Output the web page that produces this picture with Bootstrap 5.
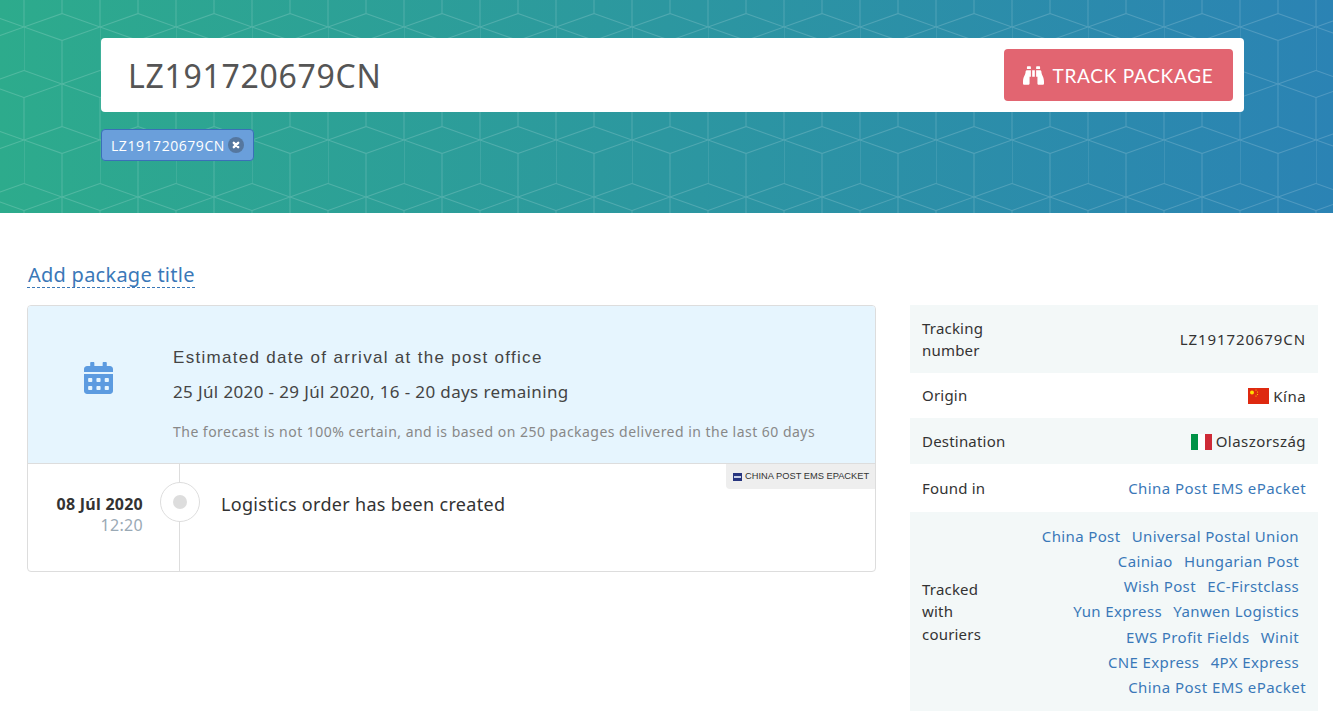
<!DOCTYPE html>
<html lang="en"><head><meta charset="utf-8"><title>Track package</title>
<link href="https://cdn.jsdelivr.net/npm/bootstrap@5.3.0/dist/css/bootstrap.min.css" rel="stylesheet">
<style>
html,body{height:721px;overflow:hidden}
body{font-family:"Noto Sans",sans-serif;color:#333;background:#fff}
a{text-decoration:none;color:#3a78b8}
.hero{height:213px;padding:38px 89px 0 101px;
background-image:url("data:image/svg+xml,%3Csvg xmlns='http://www.w3.org/2000/svg' width='76' height='113.33' viewBox='0 0 76 113.33'%3E%3Cpath fill='none' stroke='%23fff' stroke-opacity='.17' d='M0 0L38 13.33V56.67L0 70V113.33L38 100V56.67L0 43.33V0M76 0L38 13.33M76 43.33L38 56.67L76 70V113.33L38 100M0 0L38 -13.33L76 0M0 113.33L38 126.67L76 113.33'/%3E%3C/svg%3E"),linear-gradient(90deg,#2dab8c,#2b83b4);
background-position:24px 27px,0 0;background-size:76px 113.33px,100% 100%}
.searchbox{height:74px;padding:0 11px 0 27px;border-radius:4px}
.track-num{font-size:32px;color:#555;letter-spacing:.7px;padding-top:2px}
.track-btn{width:229px;height:52px;background:#e26571;color:#fff;font-family:Lato,sans-serif;font-size:19px;letter-spacing:.75px;border:0;border-radius:4px;padding:2px 0 0}
.track-btn:hover{background:#e26571;color:#fff}
.track-btn svg{margin-top:-2px}
.chipx{margin-top:17px;height:32px;width:153px;padding:0 0 0 9px;background:#6a9fdb;border:1px solid #3a6fb8;border-radius:4px;color:#fff;font-size:14px;letter-spacing:.55px;font-family:"Open Sans",sans-serif}
.chipclose{width:16px;height:16px;margin-left:3px;flex:none}
.page-body{padding:49px 15px 0 27px}
.pkg-title{display:inline-block;font-size:20px;line-height:25px;letter-spacing:.25px;border-bottom:1px dashed #3a78b8;margin:0 0 17px 0;padding-left:1px;color:#3a78b8}
.main-split{gap:34px}
.left-col{width:849px;flex:none}
.right-col{width:408px;flex:none}
.track-card{height:267px;border:1px solid #ddd;border-radius:4px;overflow:hidden}
.est{height:158px;background:#e6f5fe;border-bottom:1px solid #ddd}
.est-icon{width:145px;flex:none;padding:0 4px 14px 0}
.est-a{font-family:"Liberation Sans",sans-serif;font-size:17px;letter-spacing:1.3px;color:#444;line-height:20px;margin-top:42px}
.est-b{font-size:17px;letter-spacing:.37px;color:#444;line-height:24px;margin-top:12px}
.est-c{font-size:14px;letter-spacing:.47px;color:#888;line-height:20px;margin-top:18px}
.tl-row{position:relative;height:108px}
.tl-date{width:152px;flex:none;border-right:1px solid #ddd;text-align:right;padding:30px 36px 0 0}
.tl-d1{font-size:16px;font-weight:700;letter-spacing:.25px;line-height:20px;color:#333}
.tl-d2{font-size:16px;letter-spacing:.3px;line-height:23px;color:#9aa9b5}
.tl-dot{position:absolute;left:132px;top:18px;width:40px;height:40px;border-radius:50%;background:#fff;border:1px solid #ddd;display:flex;align-items:center;justify-content:center}
.tl-dot span{width:14px;height:14px;border-radius:50%;background:#ddd}
.tl-text{font-size:18px;letter-spacing:.31px;padding:27px 0 0 41px;line-height:26px;color:#333}
.tl-src{position:absolute;right:0;top:0;width:149px;height:25px;background:#eee;border-bottom-left-radius:4px;font-size:9.3px;font-family:"Liberation Sans",sans-serif;color:#333;padding:1px 0 0 7px;gap:3px}
.tl-src svg{margin-top:-1px}
.info-row{padding:0 12px;font-size:15px;color:#333}
.info-row.alt{background:#f3f8f8}
.info-row>span:first-child{letter-spacing:.2px}
.val{letter-spacing:.45px;padding-top:1px}
.r1{height:68px;line-height:22px}.r2{height:45px}.r3{height:46px}.r4{height:48px}.r5{height:199px}
.lbl{width:80px;flex:none}
.couriers{text-align:right;line-height:25.2px;font-size:15px;letter-spacing:.37px;padding-top:1px}
.couriers a{margin-left:7px}
.couriers .pad{padding-right:7px}
.info-row>a,.couriers .last{letter-spacing:.45px}
.tnum{letter-spacing:.9px}
</style></head><body>
<header class="hero">
 <div class="searchbox bg-white d-flex align-items-center justify-content-between">
  <span class="track-num">LZ191720679CN</span>
  <button class="btn track-btn d-flex align-items-center justify-content-center gap-2" type="button">
   <svg width="21" height="21" viewBox="0 0 512 512" fill="#fff"><path d="M416 48c0-8.84-7.16-16-16-16h-64c-8.84 0-16 7.16-16 16v48h96V48zM63.91 159.99C61.4 253.84 3.46 274.22 0 404v44c0 17.67 14.33 32 32 32h96c17.67 0 32-14.33 32-32V288h32V128H95.84c-17.63 0-31.45 14.37-31.93 31.99zm384.18 0c-.48-17.62-14.3-31.99-31.93-31.99H320v160h32v160c0 17.67 14.33 32 32 32h96c17.67 0 32-14.33 32-32v-44c-3.46-129.78-61.4-150.16-63.91-244.01zM176 32h-64c-8.84 0-16 7.16-16 16v48h96V48c0-8.84-7.16-16-16-16zm48 256h64V128h-64v160z"/></svg>
   TRACK PACKAGE</button>
 </div>
 <div class="chipx d-flex align-items-center">LZ191720679CN
  <svg class="chipclose" viewBox="0 0 16 16"><circle cx="8" cy="8" r="8" fill="#55779f"/><path d="M5.8 5.8l4.4 4.4M10.2 5.8l-4.4 4.4" stroke="#fff" stroke-width="2.4" stroke-linecap="round"/></svg>
 </div>
</header>
<main class="page-body">
 <a class="pkg-title" href="#">Add package title</a>
 <div class="d-flex main-split">
  <div class="left-col">
   <div class="track-card bg-white">
    <div class="est d-flex">
     <div class="est-icon d-flex align-items-center justify-content-center">
      <svg width="29" height="32" viewBox="0 0 448 512" preserveAspectRatio="none" fill="#5c9be0"><path d="M0 464c0 26.5 21.5 48 48 48h352c26.5 0 48-21.5 48-48V192H0v272zm320-196c0-6.6 5.4-12 12-12h40c6.6 0 12 5.4 12 12v40c0 6.6-5.4 12-12 12h-40c-6.6 0-12-5.4-12-12v-40zm0 128c0-6.6 5.4-12 12-12h40c6.6 0 12 5.4 12 12v40c0 6.6-5.4 12-12 12h-40c-6.6 0-12-5.4-12-12v-40zM192 268c0-6.6 5.4-12 12-12h40c6.6 0 12 5.4 12 12v40c0 6.6-5.4 12-12 12h-40c-6.6 0-12-5.4-12-12v-40zm0 128c0-6.6 5.4-12 12-12h40c6.6 0 12 5.4 12 12v40c0 6.6-5.4 12-12 12h-40c-6.6 0-12-5.4-12-12v-40zM64 268c0-6.6 5.4-12 12-12h40c6.6 0 12 5.4 12 12v40c0 6.6-5.4 12-12 12H76c-6.6 0-12-5.4-12-12v-40zm0 128c0-6.6 5.4-12 12-12h40c6.6 0 12 5.4 12 12v40c0 6.6-5.4 12-12 12H76c-6.6 0-12-5.4-12-12v-40zM400 64h-48V16c0-8.8-7.2-16-16-16h-32c-8.8 0-16 7.2-16 16v48H160V16c0-8.8-7.2-16-16-16h-32c-8.8 0-16 7.2-16 16v48H48C21.5 64 0 85.5 0 112v48h448v-48c0-26.5-21.5-48-48-48z"/></svg>
     </div>
     <div>
      <div class="est-a">Estimated date of arrival at the post office</div>
      <div class="est-b">25 Júl 2020 - 29 Júl 2020, 16 - 20 days remaining</div>
      <div class="est-c">The forecast is not 100% certain, and is based on 250 packages delivered in the last 60 days</div>
     </div>
    </div>
    <div class="tl-row d-flex">
     <div class="tl-date"><div class="tl-d1">08 Júl 2020</div><div class="tl-d2">12:20</div></div>
     <div class="tl-dot"><span></span></div>
     <div class="tl-text">Logistics order has been created</div>
     <div class="tl-src d-flex align-items-center">
      <svg width="9" height="8" viewBox="0 0 9 8"><rect width="9" height="8" fill="#27357f"/><rect x="1" y="3" width="7" height="2" fill="#c9d2e8"/></svg>
      CHINA POST EMS EPACKET</div>
    </div>
   </div>
  </div>
  <aside class="right-col">
   <div class="info-row alt r1 d-flex align-items-center justify-content-between"><span class="lbl">Tracking number</span><span class="tnum">LZ191720679CN</span></div>
   <div class="info-row r2 d-flex align-items-center justify-content-between"><span>Origin</span><span class="d-flex align-items-center gap-1 val">
    <svg width="21" height="16" viewBox="0 0 21 16"><rect width="21" height="16" fill="#de2910"/><circle cx="4" cy="4.5" r="2" fill="#ffde00"/><g fill="#ffde00"><circle cx="8" cy="2" r=".6"/><circle cx="9.5" cy="4" r=".6"/><circle cx="9.5" cy="6.5" r=".6"/><circle cx="8" cy="8" r=".6"/></g></svg>Kína</span></div>
   <div class="info-row alt r3 d-flex align-items-center justify-content-between"><span>Destination</span><span class="d-flex align-items-center gap-1 val">
    <svg width="21" height="16" viewBox="0 0 21 16"><rect width="7" height="16" fill="#009246"/><rect x="7" width="7" height="16" fill="#fff"/><rect x="14" width="7" height="16" fill="#ce2b37"/></svg>Olaszország</span></div>
   <div class="info-row r4 d-flex align-items-center justify-content-between"><span>Found in</span><a href="#">China Post EMS ePacket</a></div>
   <div class="info-row alt r5 d-flex align-items-center justify-content-between">
    <span class="lbl">Tracked with couriers</span>
    <div class="couriers flex-grow-1">
     <div class="pad"><a href="#">China Post</a> <a href="#">Universal Postal Union</a></div>
     <div class="pad"><a href="#">Cainiao</a> <a href="#">Hungarian Post</a></div>
     <div class="pad"><a href="#">Wish Post</a> <a href="#">EC-Firstclass</a></div>
     <div class="pad"><a href="#">Yun Express</a> <a href="#">Yanwen Logistics</a></div>
     <div class="pad"><a href="#">EWS Profit Fields</a> <a href="#">Winit</a></div>
     <div class="pad"><a href="#">CNE Express</a> <a href="#">4PX Express</a></div>
     <div class="last"><a href="#">China Post EMS ePacket</a></div>
    </div>
   </div>
  </aside>
 </div>
</main>
<script src="https://cdn.jsdelivr.net/npm/bootstrap@5.3.0/dist/js/bootstrap.bundle.min.js"></script>
</body></html>
